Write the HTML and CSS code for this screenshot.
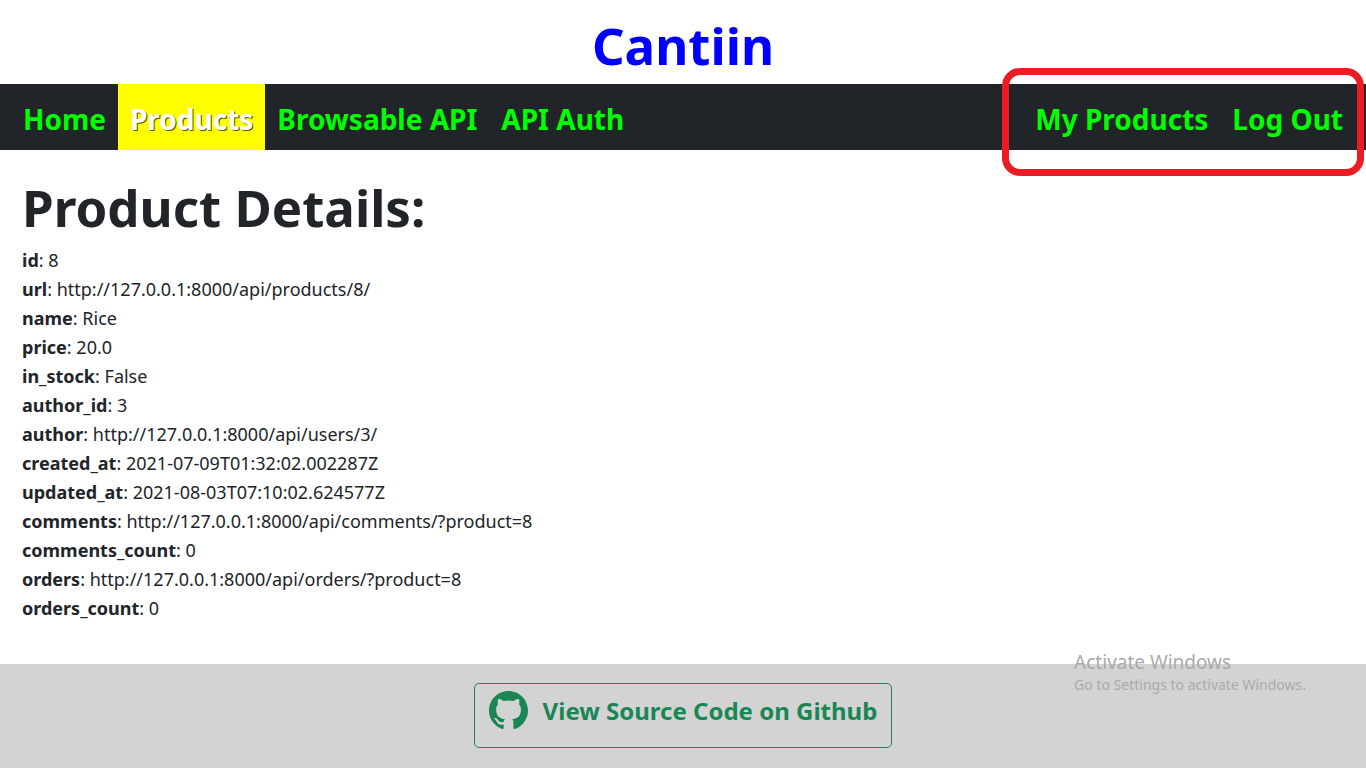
FILE: index.html
```html
<!DOCTYPE html>
<html lang="en">
<head>
<meta charset="utf-8">
<meta name="viewport" content="width=device-width, initial-scale=1">
<title>Cantiin</title>
<link rel="stylesheet" href="styles.css">
</head>
<body>
<header class="brand"><h1 class="brand-name">Cantiin</h1></header>
<nav class="navbar">
  <div class="nav-group">
    <a class="nav-link" href="#home">Home</a>
    <a class="nav-link active" href="#products" aria-current="page">Products</a>
    <a class="nav-link" href="#api">Browsable API</a>
    <a class="nav-link" href="#auth">API Auth</a>
  </div>
  <div class="nav-group account">
    <a class="nav-link" href="#mine">My Products</a>
    <a class="nav-link" href="#logout">Log Out</a>
    <span class="highlight"></span>
  </div>
</nav>
<main class="content">
  <h2 class="page-title">Product Details:</h2>
  <ul class="details">
    <li><b>id</b>: 8</li>
    <li><b>url</b>: http://127.0.0.1:8000/api/products/8/</li>
    <li><b>name</b>: Rice</li>
    <li><b>price</b>: 20.0</li>
    <li><b>in_stock</b>: False</li>
    <li><b>author_id</b>: 3</li>
    <li><b>author</b>: http://127.0.0.1:8000/api/users/3/</li>
    <li><b>created_at</b>: 2021-07-09T01:32:02.002287Z</li>
    <li><b>updated_at</b>: 2021-08-03T07:10:02.624577Z</li>
    <li><b>comments</b>: http://127.0.0.1:8000/api/comments/?product=8</li>
    <li><b>comments_count</b>: 0</li>
    <li><b>orders</b>: http://127.0.0.1:8000/api/orders/?product=8</li>
    <li><b>orders_count</b>: 0</li>
  </ul>
</main>
<footer class="footer">
  <a class="source-link" href="#source">
    <svg class="source-icon" viewBox="0 0 16 16" aria-hidden="true"><path fill="currentColor" d="M8 0C3.58 0 0 3.58 0 8c0 3.54 2.29 6.53 5.47 7.59.4.07.55-.17.55-.38 0-.19-.01-.82-.01-1.49-2.01.37-2.53-.49-2.69-.94-.09-.23-.48-.94-.82-1.13-.28-.15-.68-.52-.01-.53.63-.01 1.08.58 1.23.82.72 1.21 1.87.87 2.33.66.07-.52.28-.87.51-1.07-1.78-.2-3.64-.89-3.64-3.95 0-.87.31-1.59.82-2.15-.08-.2-.36-1.02.08-2.12 0 0 .67-.21 2.2.82.64-.18 1.32-.27 2-.27s1.36.09 2 .27c1.53-1.04 2.2-.82 2.2-.82.44 1.1.16 1.92.08 2.12.51.56.82 1.27.82 2.15 0 3.07-1.87 3.75-3.65 3.95.29.25.54.73.54 1.48 0 1.07-.01 1.93-.01 2.2 0 .21.15.46.55.38A8.01 8.01 0 0 0 16 8c0-4.42-3.58-8-8-8z"/></svg>
    <span>View Source Code on Github</span>
  </a>
</footer>
<aside class="watermark">
  <p class="watermark-title">Activate Windows</p>
  <p class="watermark-text">Go to Settings to activate Windows.</p>
</aside>
</body>
</html>
```
FILE: styles.css
```css
* { box-sizing: border-box; margin: 0; padding: 0; }

body {
  display: flex;
  flex-direction: column;
  min-height: 100vh;
  background: #fff;
  color: #212529;
  font-family: "Segoe UI", "Noto Sans", sans-serif;
  font-size: 18px;
  line-height: 29px;
}

.brand { padding: 12px 0 6px; text-align: center; }
.brand-name { color: #00f; font-size: 51px; line-height: 66px; font-weight: 700; }

.navbar {
  display: flex;
  justify-content: space-between;
  padding: 0 11px;
  background: #212529;
}
.nav-group { display: flex; }
.account { position: relative; }
.nav-link {
  padding: 15px 12px 11px;
  color: #0f0;
  font-size: 28px;
  line-height: 40px;
  font-weight: 700;
  text-decoration: none;
  white-space: nowrap;
}
.nav-link.active {
  background: #ff0;
  color: #fff;
  text-shadow: 1px 1px 0 #555500;
}
.highlight {
  position: absolute;
  inset: -16px -9px -26px -21px;
  border: 7px solid #ed1c24;
  border-radius: 18px;
  pointer-events: none;
}

.content { flex: 1; padding: 24px 22px 40px; }
.page-title { margin-bottom: 6px; font-size: 51px; line-height: 66px; font-weight: 700; }
.details { list-style: none; }

.footer {
  display: flex;
  justify-content: center;
  padding: 19px 0 20px;
  background: #d3d3d3;
}
.source-link {
  display: flex;
  align-items: flex-start;
  gap: 15px;
  padding: 7px 14px 16px;
  border: 1px solid #198754;
  border-radius: 5px;
  color: #198754;
  font-size: 24px;
  line-height: 40px;
  font-weight: 700;
  text-decoration: none;
}
.source-icon { width: 39px; height: 39px; }

.watermark {
  position: absolute;
  right: 60px;
  bottom: 72px;
  color: #aaa;
  font-size: 14px;
  line-height: 22px;
}
.watermark-title { font-size: 19px; line-height: 24px; font-weight: 400; }
```
